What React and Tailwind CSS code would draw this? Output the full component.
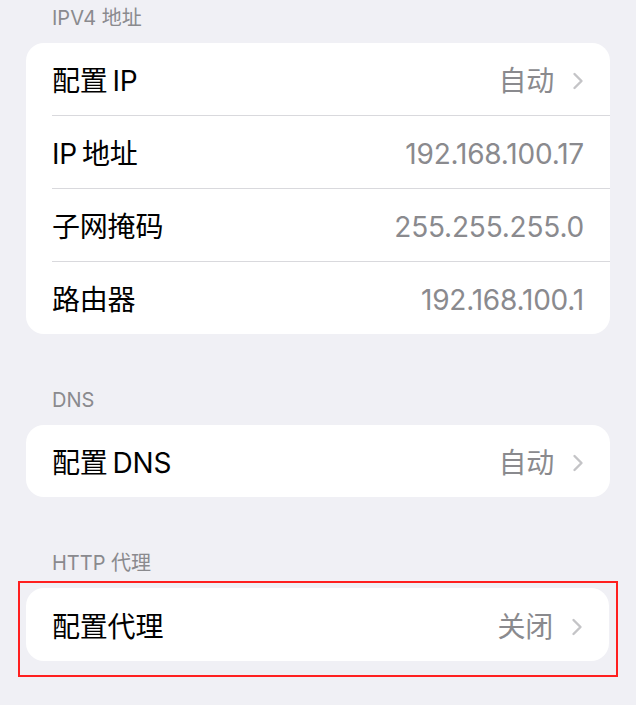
import { Fragment } from 'react'

const font = { fontFamily: 'Inter, "Noto Sans CJK SC", sans-serif' }

const Chevron = () => (
  <svg width="12" height="20" viewBox="0 0 12 20" className="ml-[18px]">
    <path d="M2.5 3 L9.5 10 L2.5 17" fill="none" stroke="#c4c4c7" strokeWidth="2.4" strokeLinecap="round" strokeLinejoin="round" />
  </svg>
)

// narrow the gap between CJK and latin words like iOS does
const Label = ({ text }) => {
  const parts = text.split(' ')
  return parts.map((p, i) => (
    <Fragment key={i}>
      {i > 0 && <span className="text-[18px]"> </span>}
      {p}
    </Fragment>
  ))
}

const Row = ({ label, value, arrow, tall }) => (
  <div className={`flex items-center pl-[26px] pr-[26px] pt-[4px] ${tall ? 'h-[73px]' : 'h-[72px]'}`}>
    <span className="flex-1 text-[28px] text-black tracking-[-0.2px]"><Label text={label} /></span>
    <span className="text-[28px] text-[#8a8a8e] tracking-[-0.2px]">{value}</span>
    {arrow && <Chevron />}
  </div>
)

const Card = ({ rows }) => (
  <div className="bg-white rounded-[18px] overflow-hidden">
    {rows.map((row, i) => (
      <Fragment key={i}>
        {i > 0 && <div className="ml-[26px] h-px bg-[#d9d9dd]" />}
        <Row {...row} />
      </Fragment>
    ))}
  </div>
)

const Header = ({ children, className }) => (
  <div className={`pl-[26px] text-[20px] text-[#8a8a8e] leading-[19px] ${className}`}>{children}</div>
)

const App = () => {
  return (
    <div style={font} className="w-[636px] h-[705px] bg-[#f0f0f5] overflow-hidden">
      <div className="px-[26px]">
        <Header className="pt-[9px] pb-[15px]">IPV4 地址</Header>
        <Card rows={[
          { label: '配置 IP', value: '自动', arrow: true },
          { label: 'IP 地址', value: '192.168.100.17' },
          { label: '子网掩码', value: '255.255.255.0' },
          { label: '路由器', value: '192.168.100.1' },
        ]} />
        <Header className="pt-[57px] pb-[15px]">DNS</Header>
        <Card rows={[{ label: '配置 DNS', value: '自动', arrow: true }]} />
        <Header className="pt-[57px] pb-[8px]">HTTP 代理</Header>
      </div>
      <div className="mx-[18px] border-2 border-[#ff1f1f] pl-[6px] pr-[7px] pt-[5px] pb-[14px]">
        <Card rows={[{ label: '配置代理', value: '关闭', arrow: true, tall: true }]} />
      </div>
    </div>
  )
}

export default App
